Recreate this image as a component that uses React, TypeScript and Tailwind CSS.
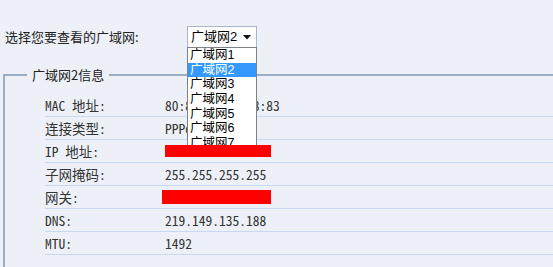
import React from "react";

const rows: { label: string; value?: string; bar?: "ip" | "gw" }[] = [
  { label: "MAC 地址:", value: "80:89:26:3E:F8:83" },
  { label: "连接类型:", value: "PPPoE" },
  { label: "IP 地址:", bar: "ip" },
  { label: "子网掩码:", value: "255.255.255.255" },
  { label: "网关:", bar: "gw" },
  { label: "DNS:", value: "219.149.135.188" },
  { label: "MTU:", value: "1492" },
];

const items = ["广域网1", "广域网2", "广域网3", "广域网4", "广域网5", "广域网6", "广域网7"];

export default function App() {
  return (
    <div className="relative w-[553px] h-[267px] overflow-hidden bg-[#edf1f7] text-[#222] font-['Noto_Sans_CJK_SC',sans-serif]">
      <div className="flex items-center pl-[5px] pt-[26px]">
        <div className="w-[182px] text-[13px] leading-[22px]">选择您要查看的广域网:</div>
        <div className="relative w-[70px] h-[22px] border border-[#a9b7ca] bg-white flex items-center pl-[3px] text-[13px] font-['Liberation_Sans','Noto_Sans_CJK_SC',sans-serif] text-black">
          <span className="leading-[20px]">广域网2</span>
          <svg className="absolute left-[55px] top-[8px]" width="8" height="5" viewBox="0 0 8 5">
            <path d="M0 0 H8 L4 4.5 Z" fill="#111" />
          </svg>
          <div className="absolute left-[-1px] top-[20px] z-20 w-[70px] h-[105px] border border-[#7f8286] bg-white overflow-hidden text-[12.5px]">
            {items.map((it, i) => (
              <div
                key={it}
                className={
                  i === 1
                    ? "h-[14.67px] leading-[14.67px] pl-[2px] bg-[#3399ff] text-white overflow-hidden"
                    : "h-[14.67px] leading-[14.67px] pl-[2px] text-black overflow-hidden"
                }
              >
                {it}
              </div>
            ))}
          </div>
        </div>
      </div>

      <fieldset className="mt-[18px] ml-[3px] -mr-[20px] border-2 border-[#9aadc7] h-[220px]">
        <legend className="ml-[22px] px-[5px] text-[13px] leading-[18px] text-[#222]">广域网2信息</legend>
        <div className="pl-[40px] pt-[10px] font-['Noto_Sans_Mono_CJK_SC','Liberation_Mono','Noto_Sans_CJK_SC',monospace] text-[13.5px] text-[#333]">
          {rows.map((r) => (
            <div key={r.label} className="flex items-center h-[23px] border-b border-[#c6d9f0]">
              <div className="w-[120px] whitespace-pre">{r.label}</div>
              {r.value && <div className="whitespace-pre">{r.value}</div>}
              {r.bar === "ip" && <div className="relative z-30 w-[106px] h-[12px] bg-[#ff0000]" />}
              {r.bar === "gw" && <div className="relative z-30 -ml-[3px] w-[109px] h-[14px] bg-[#ff0000]" />}
            </div>
          ))}
        </div>
      </fieldset>
    </div>
  );
}
